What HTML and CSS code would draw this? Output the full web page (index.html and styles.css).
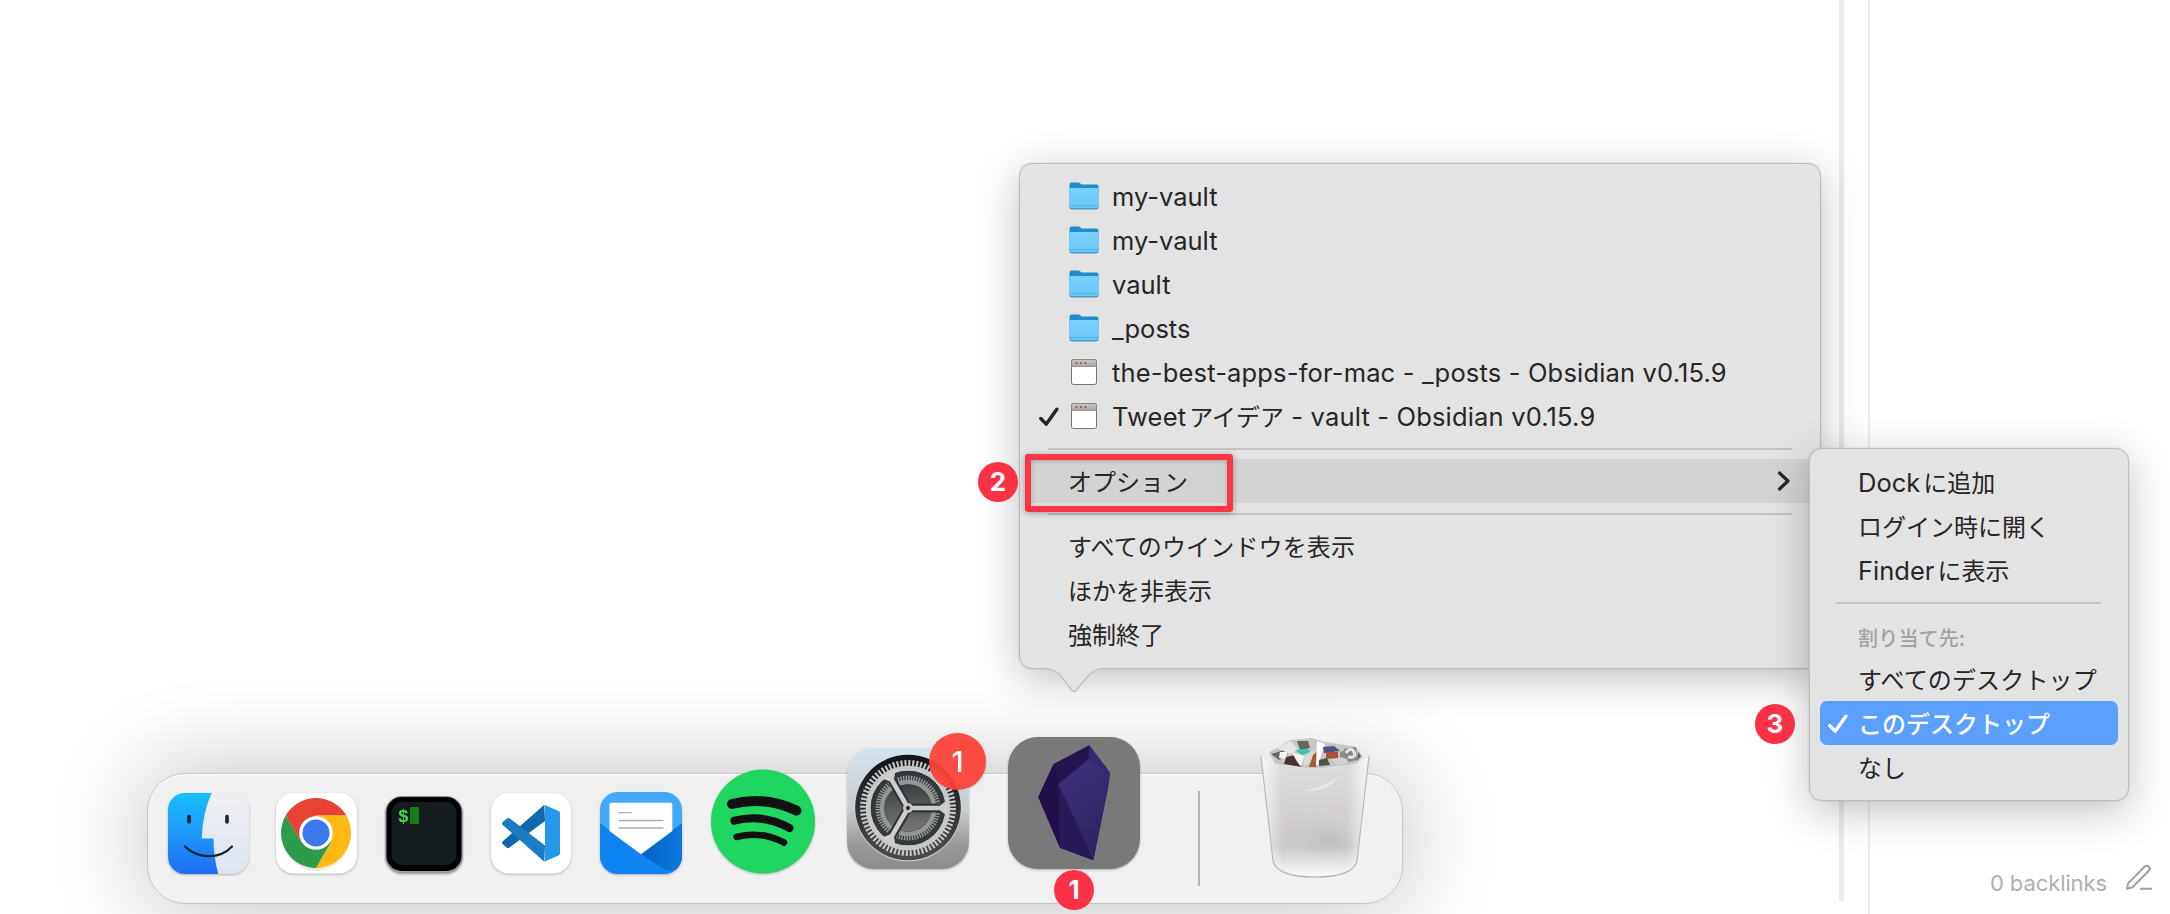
FILE: index.html
```html
<!DOCTYPE html>
<html lang="ja">
<head>
<meta charset="utf-8">
<title>Dock</title>
<link rel="stylesheet" href="styles.css">
</head>
<body>
<svg class="defs" width="0" height="0" aria-hidden="true">
  <defs>
    <linearGradient id="folderFront" x1="0" y1="0" x2="0" y2="1"><stop offset="0" stop-color="#7ad2fc"/><stop offset="1" stop-color="#6ac6f6"/></linearGradient>
    <linearGradient id="windowBar" x1="0" y1="0" x2="0" y2="1"><stop offset="0" stop-color="#c9c5c2"/><stop offset="1" stop-color="#a9a5a2"/></linearGradient>
    <symbol id="folder" viewBox="0 0 32 30">
      <path d="M1.500 4Q1.500 1.500 4 1.500H10Q11.500 1.500 12.500 2.500L13.500 3.500H28.500Q30.500 3.500 30.500 5.500V12H1.500Z" fill="#1f8fc9"/>
      <path d="M1.500 7H30.500V26Q30.500 28.500 28 28.500H4Q1.500 28.500 1.500 26Z" fill="#4a9cc5"/>
      <path d="M1.500 7H30.500V25Q30.500 27 28 27H4Q1.500 27 1.500 25Z" fill="url(#folderFront)"/>
      <path d="M1.500 24.500H30.500" stroke="#55b4e6" stroke-width="1"/>
    </symbol>
    <symbol id="window" viewBox="0 0 32 30">
      <rect x="3.500" y="2.500" width="25" height="25" rx="2" fill="#fff" stroke="#77736f"/>
      <path d="M3.500 9.500V4Q3.500 2.500 5 2.500H27Q28.500 2.500 28.500 4V9.500Z" fill="url(#windowBar)" stroke="#8a8682" stroke-width=".8"/>
      <g fill="#8a5a45"><circle cx="8.500" cy="6" r="1.100"/><circle cx="13" cy="6" r="1.100"/><circle cx="17.500" cy="6" r="1.100"/></g>
    </symbol>
    <symbol id="check" viewBox="0 0 20 20"><path d="M1.800 11.500L7.200 17.200L17.800 2.200" fill="none" stroke="currentColor" stroke-width="3.400" stroke-linejoin="round" stroke-linecap="round"/></symbol>
  </defs>
</svg>

<main class="desktop">
  <div class="scroll-track"></div>
  <div class="pane-edge"></div>

  <footer class="status">
    <span>0 backlinks</span>
    <svg width="28" height="28" viewBox="0 0 28 28"><path d="M3 20.500L19.500 3.800Q21.800 1.800 23.800 3.700Q25.700 5.700 23.600 8L7.500 24.300L2 25.700ZM15 25.700H27" fill="none" stroke="#a2a2a2" stroke-width="2" stroke-linejoin="round"/></svg>
  </footer>

  <nav class="dock">
    <svg class="app finder" width="81" height="81" viewBox="0 0 81 81">
      <defs>
        <linearGradient id="finderBlue" x1="0" y1="0" x2="0" y2="1"><stop offset="0" stop-color="#18bffc"/><stop offset=".5" stop-color="#1e98fa"/><stop offset="1" stop-color="#1e6df5"/></linearGradient>
        <linearGradient id="finderWhite" x1="0" y1="0" x2="0" y2="1"><stop offset="0" stop-color="#f0eff3"/><stop offset="1" stop-color="#dbe4ef"/></linearGradient>
        <clipPath id="finderClip"><rect width="81" height="81" rx="17"/></clipPath>
      </defs>
      <g clip-path="url(#finderClip)">
        <rect width="81" height="81" fill="url(#finderWhite)"/>
        <path d="M0 0H43.700Q34.500 20 33.700 45.600H45.500Q45.500 64 50.300 81H0Z" fill="url(#finderBlue)"/>
      </g>
      <path d="M21 23.500V29M59 23.500V29" stroke="#16242f" stroke-width="3.600" stroke-linecap="round"/>
      <path d="M17 53.500Q27 63.200 41 63.200T64 53.500" fill="none" stroke="#16242f" stroke-width="2.200" stroke-linecap="round"/>
    </svg>

    <svg class="app chrome" width="81" height="81" viewBox="0 0 81 81">
      <rect width="81" height="80.500" rx="18" fill="#fff"/>
      <ellipse cx="40" cy="43" rx="33" ry="35" fill="#d9d2c3" opacity=".5"/>
      <g transform="translate(40 40)">
        <path d="M-30.300-17.500A35 35 0 0 1 30.300-17.500H0L-15.160 8.750Z" fill="#e84235"/>
        <path d="M30.300-17.500A35 35 0 0 1 0 35L15.160 8.750L0-17.500Z" fill="#fcb913"/>
        <path d="M0 35A35 35 0 0 1-30.300-17.500L-15.160 8.750H15.160Z" fill="#2c9c4a"/>
        <circle r="16.800" fill="#fff"/><circle r="13.500" fill="#3a79ec"/>
      </g>
    </svg>

    <svg class="app terminal" width="80" height="80" viewBox="0 0 80 80">
      <rect x="1" y="2" width="78" height="77.500" rx="17" fill="#9c9c9c"/>
      <rect x="2.500" y="3" width="75" height="74" rx="15" fill="#000"/>
      <rect x="7.500" y="8" width="65" height="63" rx="10" fill="#151c20"/>
      <text x="14" y="28" class="prompt">$</text>
      <rect x="26" y="13" width="9" height="17" fill="#147d17"/>
    </svg>

    <svg class="app vscode" width="80" height="81" viewBox="0 0 80 81">
      <rect width="80" height="80.500" rx="18" fill="#fff"/>
      <path d="M53.300 11.700L11.500 48.500Q10.500 50 11.700 51L15.500 54.500Q17 55.500 18.500 54.500L54 28Z" fill="#0f68ab"/>
      <path d="M18.500 25.200Q17 24.500 15.500 25.700L11.700 29Q10.500 30.500 11.500 31.800L53.300 68.700L54 52.500Z" fill="#1b7bc4"/>
      <path d="M53.300 11.700L67.500 18Q69 18.800 69 20.500V60Q69 61.700 67.500 62.500L53.300 68.700Q54 68 54 66.500V14Q54 12.500 53.300 11.700Z" fill="#2498ea"/>
    </svg>

    <svg class="app mail" width="82" height="82" viewBox="0 0 82 82">
      <defs>
        <clipPath id="mailClip"><rect width="82" height="82" rx="18"/></clipPath>
        <linearGradient id="mailDark" x1="0" y1="0" x2="1" y2="0"><stop offset="0" stop-color="#0663be"/><stop offset="1" stop-color="#0a79e0"/></linearGradient>
      </defs>
      <g clip-path="url(#mailClip)">
        <rect width="82" height="82" fill="#45a9fa"/>
        <path d="M0 31L41 62L82 31V82H0Z" fill="#0d84f2"/>
        <path d="M82 31L41 62L62 76Q72 82 82 74Z" fill="url(#mailDark)"/>
        <path d="M9.500 12.500Q9.500 10.700 11.500 10.700H70.500Q72.300 10.700 72.300 12.500V39L41 62.300L9.500 39Z" fill="#fff"/>
        <path d="M18.700 20.700H31.700M18.700 28.500H63.500M18.700 36H63.500" stroke="#a9adb0" stroke-width="1.300"/>
      </g>
    </svg>

    <svg class="app spotify" width="104" height="105" viewBox="0 0 104 105">
      <circle cx="52" cy="52.500" r="52" fill="#1fd760"/>
      <g fill="none" stroke="#111" stroke-linecap="round">
        <path d="M21 35Q54 26.500 85.500 41.500" stroke-width="10"/>
        <path d="M23.500 51.700Q52 44.500 78.500 59" stroke-width="8"/>
        <path d="M25.500 68Q50 61.500 73 73.500" stroke-width="6.500"/>
      </g>
    </svg>

    <div class="app settings">
      <svg width="122" height="121" viewBox="0 0 122 121">
        <defs>
          <linearGradient id="plate" x1="0" y1="0" x2="0" y2="1"><stop offset="0" stop-color="#d3e4ed"/><stop offset=".5" stop-color="#c8cdd0"/><stop offset=".8" stop-color="#9a9a99"/><stop offset="1" stop-color="#8b8b8a"/></linearGradient>
          <linearGradient id="well" x1="0" y1="0" x2="0" y2="1"><stop offset="0" stop-color="#101416"/><stop offset="1" stop-color="#4d4d4c"/></linearGradient>
          <linearGradient id="hub" x1="0" y1="0" x2="0" y2="1"><stop offset="0" stop-color="#3c4042"/><stop offset="1" stop-color="#777"/></linearGradient>
        </defs>
        <rect width="122" height="121" rx="27" fill="url(#plate)"/>
        <g transform="translate(61 60)">
          <circle r="53.500" fill="#c9c9c9"/><circle cy="-.5" r="52.800" fill="url(#well)"/>
          <circle r="44.500" fill="none" stroke="#c3c5c6" stroke-width="7" stroke-dasharray="2.100 1.783"/>
          <circle r="39.800" fill="none" stroke="#c6c8c9" stroke-width="5"/>
          <circle r="37" fill="#34383a"/>
          <circle r="30" fill="none" stroke="#9b9d9e" stroke-width="5" stroke-dasharray="1.400 1.218"/>
          <circle r="26" fill="none" stroke="#939697" stroke-width="4.500"/>
          <circle r="23.500" fill="url(#hub)"/>
          <g fill="none" stroke="#303436" stroke-width="9"><path d="M0 0H36M0 0L-18-31.200M0 0L-18 31.200"/></g>
          <g fill="none" stroke="#cbcdce" stroke-width="4.600"><path d="M0 0H40M0 0L-20-34.600M0 0L-20 34.600"/></g>
          <g fill="#cbcdce"><path d="M31-1.500L39-8V8L31 1.500Z"/><path d="M31-1.500L39-8V8L31 1.500Z" transform="rotate(120)"/><path d="M31-1.500L39-8V8L31 1.500Z" transform="rotate(240)"/></g>
          <circle r="5" fill="#c4c6c7"/><circle r="2" fill="#222"/>
        </g>
      </svg>
      <span class="app-badge">1</span>
    </div>

    <svg class="app obsidian" width="132" height="132" viewBox="0 0 132 132">
      <defs><linearGradient id="gem" x1="0" y1="0" x2=".4" y2="1"><stop offset="0" stop-color="#3f3180"/><stop offset="1" stop-color="#2f2362"/></linearGradient></defs>
      <rect width="132" height="132" rx="30" fill="#797979"/>
      <path d="M81.300 8.300L45.500 27.300L30.300 60L52 110.700L85.300 123.300L100 51L102 35.700Z" fill="#241452"/>
      <path d="M81.300 8.300L45.500 27.300L50.300 47.300L80.500 22.300Z" fill="#25154f"/>
      <path d="M81.300 8.300L80.500 22.300L102 35.700Z" fill="#37276f"/>
      <path d="M50.300 47.300L80.500 22.300L102 35.700L100 51L85.300 123.300Z" fill="url(#gem)"/>
      <path d="M50.300 47.300L52 110.700L30.300 60L45.500 27.300Z" fill="#200f4b"/>
      <path d="M50.300 47.300L85.300 123.300L52 110.700Z" fill="#281a58"/>
    </svg>

    <div class="divider"></div>

    <svg class="app trash" width="110" height="142" viewBox="0 0 110 142">
      <defs>
        <linearGradient id="bin" x1="0" y1="0" x2="0" y2="1"><stop offset="0" stop-color="#dedede"/><stop offset=".75" stop-color="#cacaca"/><stop offset="1" stop-color="#fafafa"/></linearGradient>
        <linearGradient id="binSides" x1="0" y1="0" x2="1" y2="0"><stop offset="0" stop-color="#fff" stop-opacity=".7"/><stop offset=".2" stop-color="#fff" stop-opacity="0"/><stop offset=".8" stop-color="#fff" stop-opacity="0"/><stop offset="1" stop-color="#fff" stop-opacity=".75"/></linearGradient>
        <filter id="soft" x="-50%" y="-50%" width="200%" height="200%"><feGaussianBlur stdDeviation="6"/></filter>
        <filter id="paper" x="-10%" y="-10%" width="120%" height="120%"><feGaussianBlur stdDeviation=".7"/></filter>
      </defs>
      <path d="M1 18Q8 8 30 4Q55 0 80 6Q102 10 109 18L97 124Q94 140 55 141Q18 140 13 124Z" fill="#ececec"/>
      <g filter="url(#paper)">
        <path d="M9 15L21 9L30 3L52 1L64 5L85 8L96 10L103 20L96 27L55 32L15 27Z" fill="#c6c6c4"/>
        <path d="M11 17L24 13L28 17L19 23Z" fill="#6b6964"/>
        <path d="M26 20L36 18L42 30L24 27Z" fill="#4b3335"/>
        <path d="M20 15L28 15L25 22L19 21Z" fill="#f4f4f2"/>
        <path d="M17 11L31 4L38 13L30 17Z" fill="#e5e5e3"/>
        <path d="M37 4L48 4L50 11L40 13Z" fill="#5f6b5b"/>
        <path d="M35 13L48 12L50 15L42 18Z" fill="#35c5af"/>
        <path d="M32 15L44 19L41 30L36 23Z" fill="#f3f3f1"/>
        <path d="M44 19L54 13L52 24L44 29Z" fill="#d8d8d6"/>
        <path d="M53 18L58 14L56 30L49 30Z" fill="#a65a3c"/>
        <path d="M57 4L65 7L58 28L56 28Z" fill="#fff"/>
        <path d="M63 10L74 9L80 14L64 16Z" fill="#4a5284"/>
        <path d="M66 15L78 15L78 21L66 22Z" fill="#a8523a"/>
        <path d="M59 23L67 21L70 28L59 29Z" fill="#4a5546"/>
        <path d="M80 15L86 13L88 21L80 22Z" fill="#8c8a8a"/>
        <path d="M84 12L96 10L97 23L88 25Z" fill="#858486"/>
        <path d="M86 16Q91 9 94 15T88 20" fill="none" stroke="#e4e4e4" stroke-width="3"/>
        <path d="M70 23L82 20L89 25L80 29Z" fill="#d7d0ca"/>
        <path d="M98 15L101 19L97 24Z" fill="#626266"/>
      </g>
      <path d="M1 19Q14 31 55 31T109 19L97 124Q94 140 55 140T13 124Z" fill="url(#bin)"/>
      <g filter="url(#soft)">
        <ellipse cx="35" cy="94" rx="14" ry="7" fill="#d8c4c1" opacity=".5"/>
        <ellipse cx="80" cy="72" rx="12" ry="7" fill="#dccbc6" opacity=".45"/>
        <ellipse cx="67" cy="103" rx="19" ry="11" fill="#b9b9b9" opacity=".55"/>
      </g>
      <path d="M1 19Q14 31 55 31T109 19L97 124Q94 140 55 140T13 124Z" fill="url(#binSides)"/>
      <path d="M1 19L13 124Q17 140 55 140T97 124L109 19" fill="none" stroke="#b4b4b4" stroke-width="1.100"/>
      <path d="M44 54Q69 55 79 39Q67 49 44 54Z" fill="#ececec" opacity=".8"/>
    </svg>
  </nav>

  <section class="menu main-menu">
    <svg class="tail" width="60" height="30" viewBox="0 0 60 30"><path d="M0 0V2.500Q10 2.500 16 9L26 22Q30 29 34 22L45 9Q51 2.500 60 2.500V0Z" fill="#e3e3e3"/><path d="M0 2.500Q10 2.500 16 9L26 22Q30 29 34 22L45 9Q51 2.500 60 2.500" fill="none" stroke="#bcbcbc" stroke-width="1.200"/></svg>
    <div class="item"><svg class="icon"><use href="#folder"/></svg><span>my-vault</span></div>
    <div class="item"><svg class="icon"><use href="#folder"/></svg><span>my-vault</span></div>
    <div class="item"><svg class="icon"><use href="#folder"/></svg><span>vault</span></div>
    <div class="item"><svg class="icon"><use href="#folder"/></svg><span>_posts</span></div>
    <div class="item"><svg class="icon"><use href="#window"/></svg><span class="long">the-best-apps-for-mac - _posts - Obsidian v0.15.9</span></div>
    <div class="item"><svg class="tick"><use href="#check"/></svg><svg class="icon"><use href="#window"/></svg><span class="long">Tweet<span class="jp gap">アイデア</span> - vault - Obsidian v0.15.9</span></div>
    <div class="rule"></div>
    <div class="item open jp"><span>オプション</span>
      <svg class="chevron" width="14" height="20" viewBox="0 0 14 20"><path d="M2.500 2L11 10L2.500 18" fill="none" stroke="#262626" stroke-width="3.200" stroke-linecap="round" stroke-linejoin="round"/></svg>
    </div>
    <div class="rule"></div>
    <div class="item jp wide">すべてのウインドウを表示</div>
    <div class="item jp">ほかを非表示</div>
    <div class="item jp">強制終了</div>
  </section>

  <section class="menu sub-menu">
    <div class="item"><span>Dock<span class="jp gap">に追加</span></span></div>
    <div class="item jp">ログイン時に開く</div>
    <div class="item"><span>Finder<span class="jp gap">に表示</span></span></div>
    <div class="rule"></div>
    <div class="heading">割り当て先:</div>
    <div class="item jp wide">すべてのデスクトップ</div>
    <div class="item jp selected"><svg class="tick"><use href="#check"/></svg>このデスクトップ</div>
    <div class="item jp">なし</div>
  </section>

  <div class="callout"></div>
  <span class="step step-one">1</span>
  <span class="step step-two">2</span>
  <span class="step step-three">3</span>
</main>
</body>
</html>
```
FILE: styles.css
```css
* { box-sizing: border-box; }
html, body { height: 914px; overflow: hidden; }
body { margin: 0; background: #fff; font-family: Inter, "Noto Sans CJK JP", sans-serif; color: #262626; }
svg { display: block; flex: none; }
.defs { position: absolute; }
.desktop { position: relative; width: 2170px; height: 914px; overflow: hidden; background: #fff; }

.scroll-track { position: absolute; left: 1839px; top: 0; width: 5px; height: 901px; background: #ebebeb; }
.pane-edge { position: absolute; left: 1868px; top: 0; width: 2px; height: 914px; background: #eee; }

.status { position: absolute; left: 1990px; top: 863px; display: flex; gap: 18px; font-size: 22px; line-height: 41px; letter-spacing: -.1px; color: #b0b0b0; }

/* Dock */
.dock { position: absolute; left: 147px; top: 773px; width: 1256px; height: 131px; padding: 0 32px 29px 21px; display: flex; align-items: flex-end; border-radius: 38px; background: #f0f0f0; border: 1px solid #c6c6c6; box-shadow: inset 0 1px 1px #fff, 0 0 90px rgba(0, 0, 0, .27); }
.app { flex: none; filter: drop-shadow(0 1px 1px rgba(0, 0, 0, .25)); }
.finder { margin-left: -1px; margin-right: 27px; }
.chrome { margin-right: 27px; }
.terminal { margin-right: 27px; }
.vscode { margin-right: 29px; }
.mail { margin-right: 29px; }
.spotify { margin-right: 32px; }
.settings { position: relative; margin-right: 39px; margin-bottom: 5px; }
.obsidian { margin-right: 58px; margin-bottom: 5px; }
.divider { width: 2px; height: 95px; margin-bottom: -12px; margin-right: 60px; background: #b3b3b3; flex: none; }
.trash { margin-bottom: -5px; filter: none; }
.prompt { font: bold 18px "Liberation Mono", monospace; fill: #38e03c; }
.app-badge { position: absolute; left: 82px; top: -15px; width: 57px; height: 57px; border-radius: 50%; background: rgba(255, 66, 56, .93); color: #fff; font-size: 29px; font-weight: 500; line-height: 58px; text-align: center; }

/* Menus */
.menu { position: absolute; background: #e3e3e3; border: 1px solid #bcbcbc; box-shadow: 0 10px 40px rgba(0, 0, 0, .25), 0 0 2px rgba(0, 0, 0, .12); }
.main-menu { left: 1019px; top: 163px; width: 802px; height: 506px; border-radius: 13px; padding-top: 10px; }
.sub-menu { left: 1809px; top: 448px; width: 320px; height: 353px; border-radius: 13px; padding-top: 11px; }
.item { position: relative; display: flex; align-items: center; height: 44px; padding-left: 48px; font-size: 25.500px; white-space: nowrap; }
.item.jp { font-size: 24px; }
.jp { font-family: "Noto Sans CJK JP", sans-serif; font-size: 24px; font-weight: 400; line-height: 36px; letter-spacing: 0; }
.item.wide { letter-spacing: .15px; }
.gap { margin-left: 3px; }
.icon { width: 32px; height: 30px; margin-right: 12px; }
.long { letter-spacing: .17px; }
.tick { position: absolute; left: 19px; top: 13px; width: 20px; height: 20px; }
.main-menu .rule { height: 2px; margin: 10px 28px 9px; background: #c3c3c3; }
.item.open { margin: 0 5px; padding-left: 43px; padding-right: 24px; justify-content: space-between; border-radius: 6px; background: #d3d3d3; }
.sub-menu .rule { height: 2px; margin: 10px 27px 10px 26px; background: #c3c3c3; }
.heading { height: 44px; padding-left: 48px; font: 500 20px/47px "Noto Sans CJK JP", sans-serif; letter-spacing: .2px; color: #a3a3a3; margin-bottom: -1px; }
.item.selected { margin: 0 10px; padding-left: 38px; border-radius: 7px; background: #5b9fff; color: #fff; font-weight: 500; }
.selected .tick { left: 8px; }
.tail { position: absolute; left: 24px; top: 502px; }

/* Step annotations */
.callout { position: absolute; left: 1025px; top: 454px; width: 208px; height: 58px; border: 6px solid #f93548; border-radius: 3px; box-shadow: 0 1px 6px rgba(0, 0, 0, .3), inset 0 1px 5px rgba(0, 0, 0, .2); }
.step { position: absolute; width: 40px; height: 40px; border-radius: 50%; background: #fc3145; color: #fff; font-size: 26px; font-weight: 700; line-height: 40px; text-align: center; }
.step-one { left: 1054px; top: 870px; }
.step-two { left: 978px; top: 462px; }
.step-three { left: 1755px; top: 704px; }
```
